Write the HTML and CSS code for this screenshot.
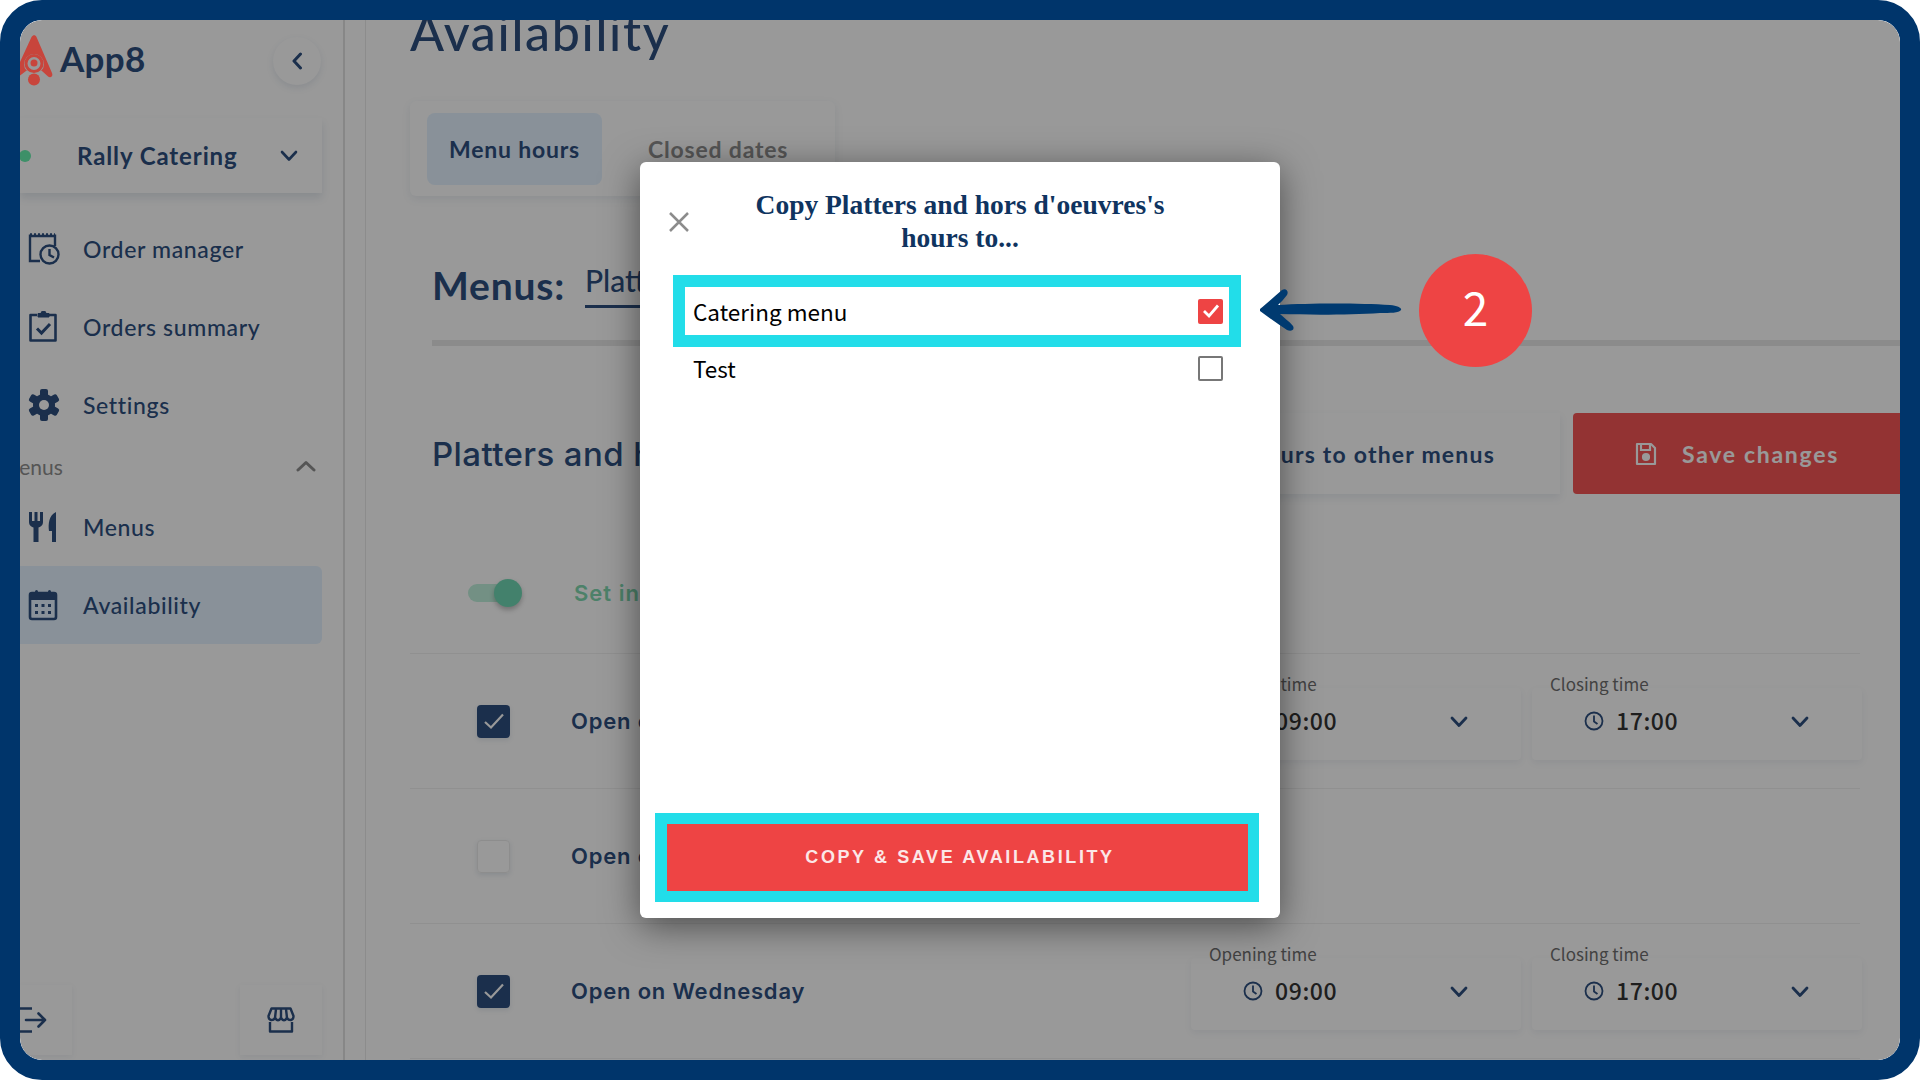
FILE: index.html
```html
<!DOCTYPE html>
<html>
	<head>
		<title>App8 - Availability</title>
		<link rel="stylesheet" href="styles.css">
	</head>
	<body>
		<div class="frame">
			<div class="app">
				<div class="sidebar">
					<div class="brand">
						<svg class="rocket" width="40" height="52" viewBox="0 0 40 52">
							<path fill="#c8453c" d="M11.500 2 C13 -0.500 15.500 -0.500 16.500 2 L32 38 C33.500 42 30 43.500 27.500 41 L22 36 H6 L-2 42 C-5 44 -6 40 -5 38 Z"/>
							<circle cx="14" cy="29" r="10" fill="#999"/>
							<circle cx="14" cy="28.500" r="8" fill="none" stroke="#c8453c" stroke-width="3"/>
							<circle cx="14" cy="28" r="3.500" fill="#c8453c"/>
							<circle cx="14" cy="44.500" r="6" fill="#c8453c"/>
						</svg>
						<span class="brand-name">App8</span>
						<div class="collapse">
							<svg width="12" height="18" viewBox="0 0 12 18"><path d="M9.5 2 L3 9 L9.5 16" fill="none" stroke="#2d4f7f" stroke-width="3" stroke-linecap="round" stroke-linejoin="round"/></svg>
						</div>
					</div>
					<div class="store-select">
						<span class="store-dot"></span>
						<span class="store-name">Rally Catering</span>
						<svg width="18" height="12" viewBox="0 0 18 12"><path d="M2 2 L9 9.5 L16 2" fill="none" stroke="#2d4f7f" stroke-width="2.6" stroke-linecap="round" stroke-linejoin="round"/></svg>
					</div>
					<div class="nav-item">
						<div class="nav-icon">
							<svg width="32" height="32" viewBox="0 0 32 32" fill="none" stroke="#2d4f7f" stroke-width="2.4">
								<path d="M2 1.5 V28 H12 M2 3 H27 V1.5 M27 3 V13" />
								<path d="M2 1.5 H27" stroke-dasharray="2 2"/>
								<circle cx="21.5" cy="21.5" r="9"/>
								<path d="M21.5 16 V22 L26 24.5"/>
							</svg>
						</div>
						Order manager
					</div>
					<div class="nav-item">
						<div class="nav-icon">
							<svg width="32" height="32" viewBox="0 0 32 32" fill="none" stroke="#2d4f7f" stroke-width="2.6">
								<path d="M9 4 H2.5 V29.5 H27.5 V4 H21" stroke-linejoin="round"/>
								<path d="M10 6 V2.5 H13 A2.5 2.5 0 0 1 18 2.5 H21 V6 Z" fill="#2d4f7f" stroke-width="1"/>
								<path d="M9 17.5 L13.5 22 L22 13" stroke-width="3"/>
							</svg>
						</div>
						Orders summary
					</div>
					<div class="nav-item">
						<div class="nav-icon">
							<svg width="32" height="32" viewBox="0 0 32 32" fill="#2d4f7f">
								<rect x="12" y="0" width="8" height="32" rx="2"/>
								<rect x="12" y="0" width="8" height="32" rx="2" transform="rotate(60 16 16)"/>
								<rect x="12" y="0" width="8" height="32" rx="2" transform="rotate(120 16 16)"/>
								<circle cx="16" cy="16" r="11"/>
								<circle cx="16" cy="16" r="5" fill="#fff"/>
							</svg>
						</div>
						Settings
					</div>
					<div class="nav-section">
						<span>Menus</span>
						<svg width="20" height="12" viewBox="0 0 20 12"><path d="M2 10 L10 2.5 L18 10" fill="none" stroke="#8e8e8e" stroke-width="3" stroke-linecap="round" stroke-linejoin="round"/></svg>
					</div>
					<div class="nav-item">
						<div class="nav-icon">
							<svg width="32" height="32" viewBox="0 0 32 32" fill="#2d4f7f">
								<path d="M1 1 H4 V10 H6.5 V1 H9.5 V10 H12 V1 H15 V11 C15 15 12 16 10.5 16.5 V31 H5.5 V16.5 C4 16 1 15 1 11 Z"/>
								<path d="M28 1 V31 H24 V20 H21 C20 13 21 4 28 1 Z"/>
							</svg>
						</div>
						Menus
					</div>
					<div class="nav-item nav-active">
						<div class="nav-icon">
							<svg width="32" height="32" viewBox="0 0 32 32">
								<rect x="2" y="4" width="26" height="26" rx="2" fill="none" stroke="#2d4f7f" stroke-width="2.6"/>
								<path d="M2 4 H28 V11 H2 Z" fill="#2d4f7f"/>
								<rect x="7" y="1" width="3" height="6" rx="1.5" fill="#2d4f7f"/>
								<rect x="20" y="1" width="3" height="6" rx="1.5" fill="#2d4f7f"/>
								<g fill="#2d4f7f">
									<rect x="7" y="15" width="3" height="3"/><rect x="13.5" y="15" width="3" height="3"/><rect x="20" y="15" width="3" height="3"/>
									<rect x="7" y="22" width="3" height="3"/><rect x="13.5" y="22" width="3" height="3"/><rect x="20" y="22" width="3" height="3"/>
								</g>
							</svg>
						</div>
						Availability
					</div>
					<div class="side-bottom">
						<div class="side-btn side-exit">
							<svg width="30" height="26" viewBox="0 0 30 26" fill="none" stroke="#2d4f7f" stroke-width="2.6">
								<path d="M0 1.5 H12 M0 24.5 H12"/>
								<path d="M6 13 H25 M18.500 6.500 L25 13 L18.500 19.500" stroke-linecap="round" stroke-linejoin="round"/>
							</svg>
						</div>
						<div class="side-btn side-store">
							<svg width="28" height="26" viewBox="0 0 28 26" fill="none" stroke="#2d4f7f" stroke-width="2.4" stroke-linejoin="round">
								<path d="M3 15 V24.500 H25 V15"/>
								<path d="M4.500 1.500 H23.500 L26.500 9 C26.500 14 22 14 20 11 C18 14 16 14 14 11 C12 14 10 14 8 11 C6 14 1.500 14 1.500 9 Z"/>
								<path d="M9 2 L8 11 M14 2 V11 M19 2 L20 11"/>
							</svg>
						</div>
					</div>
				</div>

				<div class="main">
					<h1 class="page-title">Availability</h1>
					<div class="tabs">
						<div class="tab tab-active">Menu hours</div>
						<div class="tab">Closed dates</div>
					</div>
					<div class="menu-picker">
						<h2>Menus:</h2>
						<span class="menu-link">Platters and hors d'oeuvres</span>
					</div>
					<div class="menu-line"></div>
					<div class="hours-head">
						<h3>Platters and hors d'oeuvres</h3>
						<div class="copy-btn">Copy hours to other menus</div>
						<div class="save-btn">
							<svg width="22" height="24" viewBox="0 0 22 24" fill="none" stroke="#fff" stroke-width="2.2">
								<path d="M2 2 H16 L20 6 V22 H2 Z" stroke-linejoin="round"/>
								<path d="M6 2 V8 H15 V2"/>
								<circle cx="11" cy="15" r="3" fill="#fff"/>
							</svg>
							Save changes
						</div>
					</div>
					<div class="day-row toggle-row">
						<div class="toggle"><span class="knob"></span></div>
						<span class="toggle-text">Set individual hours</span>
					</div>
					<div class="day-row">
						<div class="day-check on"><svg width="24" height="20" viewBox="0 0 24 20"><path d="M3 11 L9 16.500 L21 3.500" fill="none" stroke="#fff" stroke-width="2.200"/></svg></div>
						<span class="day-name">Open on Monday</span>
						<div class="time-field">
							<label>Opening time</label>
							<div class="time-value">
								<svg class="clock" width="20" height="20" viewBox="0 0 20 20" fill="none" stroke="#2d4f7f" stroke-width="1.800"><circle cx="10" cy="10" r="8.500"/><path d="M10 4.500 V10.500 L13.500 13"/></svg>
								<span>09:00</span>
								<svg class="chev" width="18" height="12" viewBox="0 0 18 12"><path d="M2 2 L9 9.500 L16 2" fill="none" stroke="#2d4f7f" stroke-width="2.800" stroke-linecap="round" stroke-linejoin="round"/></svg>
							</div>
						</div>
						<div class="time-field">
							<label>Closing time</label>
							<div class="time-value">
								<svg class="clock" width="20" height="20" viewBox="0 0 20 20" fill="none" stroke="#2d4f7f" stroke-width="1.800"><circle cx="10" cy="10" r="8.500"/><path d="M10 4.500 V10.500 L13.500 13"/></svg>
								<span>17:00</span>
								<svg class="chev" width="18" height="12" viewBox="0 0 18 12"><path d="M2 2 L9 9.500 L16 2" fill="none" stroke="#2d4f7f" stroke-width="2.800" stroke-linecap="round" stroke-linejoin="round"/></svg>
							</div>
						</div>
					</div>
					<div class="day-row">
						<div class="day-check"></div>
						<span class="day-name">Open on Tuesday</span>
					</div>
					<div class="day-row">
						<div class="day-check on"><svg width="24" height="20" viewBox="0 0 24 20"><path d="M3 11 L9 16.500 L21 3.500" fill="none" stroke="#fff" stroke-width="2.200"/></svg></div>
						<span class="day-name">Open on Wednesday</span>
						<div class="time-field">
							<label>Opening time</label>
							<div class="time-value">
								<svg class="clock" width="20" height="20" viewBox="0 0 20 20" fill="none" stroke="#2d4f7f" stroke-width="1.800"><circle cx="10" cy="10" r="8.500"/><path d="M10 4.500 V10.500 L13.500 13"/></svg>
								<span>09:00</span>
								<svg class="chev" width="18" height="12" viewBox="0 0 18 12"><path d="M2 2 L9 9.500 L16 2" fill="none" stroke="#2d4f7f" stroke-width="2.800" stroke-linecap="round" stroke-linejoin="round"/></svg>
							</div>
						</div>
						<div class="time-field">
							<label>Closing time</label>
							<div class="time-value">
								<svg class="clock" width="20" height="20" viewBox="0 0 20 20" fill="none" stroke="#2d4f7f" stroke-width="1.800"><circle cx="10" cy="10" r="8.500"/><path d="M10 4.500 V10.500 L13.500 13"/></svg>
								<span>17:00</span>
								<svg class="chev" width="18" height="12" viewBox="0 0 18 12"><path d="M2 2 L9 9.500 L16 2" fill="none" stroke="#2d4f7f" stroke-width="2.800" stroke-linecap="round" stroke-linejoin="round"/></svg>
							</div>
						</div>
					</div>
				</div>

				<div class="dim"></div>

				<div class="modal">
					<div class="modal-head">
						<svg class="modal-close" width="22" height="22" viewBox="0 0 22 22"><path d="M2 2 L20 20 M20 2 L2 20" stroke="#8c8c8c" stroke-width="2.500" fill="none"/></svg>
						<div class="modal-title">Copy Platters and hors d'oeuvres's hours to...</div>
					</div>
					<div class="copy-row copy-row-marked">
						<span>Catering menu</span>
						<div class="copy-check on"><svg width="20" height="18" viewBox="0 0 20 18"><path d="M3 9 L8 14 L17 3.500" fill="none" stroke="#fff" stroke-width="2.800"/></svg></div>
					</div>
					<div class="copy-row">
						<span>Test</span>
						<div class="copy-check"></div>
					</div>
					<div class="copy-action">
						<div class="copy-save">COPY &amp; SAVE AVAILABILITY</div>
					</div>
				</div>

				<svg class="arrow" width="142" height="42" viewBox="0 0 142 42">
					<path fill="#003a70" d="M0 20 C5 16 14 8 22 1 C26 -1 29 2 27 6 C24 10 21 13 18 16 C50 14 100 14 130 16 C138 17 142 19 141 21 C139 24 130 24 120 24 C90 26 50 26 20 25 C24 29 29 32 33 37 C35 41 31 43 27 41 C18 35 8 28 0 22 Z"/>
				</svg>
				<div class="step-badge">2</div>
			</div>
		</div>
	</body>
</html>
```

FILE: styles.css
```css
html {
  height: 100%;
}

body {
  margin: 0;
  background-color: #fff;
  font-family: "Lato", sans-serif;
  color: #2d4f7f;
}

.frame {
  width: 1920px;
  height: 1080px;
  box-sizing: border-box;
  border: 20px solid #00356b;
  border-radius: 42px;
  overflow: hidden;
}

.app {
  position: relative;
  display: flex;
  width: 1880px;
  height: 1040px;
  border-radius: 22px;
  overflow: hidden;
  background-color: #fff;
}

/* sidebar */

.sidebar {
  display: flex;
  flex-direction: column;
  flex: none;
  width: 325px;
  height: 1040px;
  box-sizing: border-box;
  padding-right: 21px;
  border-right: 2px solid #e2e2e2;
}

.brand {
  display: flex;
  align-items: center;
  height: 50px;
  margin-top: 16px;
  margin-bottom: 32px;
}

/* the logo keeps its colour through the dim layer */
.rocket {
  position: relative;
  z-index: 2;
  flex: none;
  overflow: visible;
}

.brand-name {
  margin-left: 0;
  margin-top: -6px;
  font-size: 35px;
  font-weight: 700;
  letter-spacing: 0.3px;
}

.collapse {
  display: flex;
  align-items: center;
  justify-content: center;
  width: 48px;
  height: 48px;
  margin-left: auto;
  margin-right: 1px;
  border-radius: 50%;
  box-shadow: 0 3px 7px rgba(60, 90, 130, 0.12);
}

.store-select {
  display: flex;
  align-items: center;
  height: 75px;
  margin-bottom: 17px;
  padding-right: 24px;
  box-shadow: 0 5px 8px rgba(60, 90, 130, 0.14);
}

.store-dot {
  flex: none;
  width: 12px;
  height: 12px;
  margin-left: -1px;
  border-radius: 50%;
  background-color: #66f0ae;
}

.store-name {
  flex: 1;
  margin-left: 46px;
  font-size: 24px;
  font-weight: 700;
  letter-spacing: 0.9px;
}

.nav-item {
  display: flex;
  align-items: center;
  flex: none;
  height: 78px;
  padding-left: 9px;
  font-size: 23px;
  font-weight: 500;
  letter-spacing: 0.65px;
}

.nav-icon {
  display: flex;
  flex: none;
  width: 54px;
}

.nav-icon svg {
  margin-left: -1px;
}

.nav-active {
  border-radius: 0 6px 6px 0;
  background-color: #e4f2ff;
}

.nav-section {
  display: flex;
  align-items: center;
  justify-content: space-between;
  flex: none;
  height: 44px;
  margin-left: -20px;
  padding-right: 6px;
  color: #8e8e8e;
  font-size: 21px;
}

.side-bottom {
  display: flex;
  justify-content: space-between;
  margin-top: auto;
  margin-bottom: 5px;
}

.side-btn {
  display: flex;
  align-items: center;
  height: 70px;
  box-shadow: 0 2px 6px rgba(60, 90, 130, 0.08);
}

.side-exit {
  width: 52px;
}

.side-store {
  justify-content: center;
  width: 82px;
}

/* main */

.main {
  flex: none;
  width: 1535px;
  height: 1040px;
  box-sizing: border-box;
  margin-left: 20px;
  padding-left: 44px;
  border-left: 1px solid #eaeaea;
  font-family: "Inter", sans-serif;
}

.page-title {
  margin: -20px 0 0 0;
  height: 66px;
  font-family: "Lato", sans-serif;
  font-size: 50px;
  line-height: 64px;
  font-weight: 500;
  letter-spacing: 1.7px;
}

.tabs {
  display: flex;
  align-items: center;
  width: 425px;
  height: 95px;
  box-sizing: border-box;
  margin-top: 35px;
  padding-left: 17px;
  border-radius: 6px;
  box-shadow: 0 3px 8px rgba(60, 90, 130, 0.1);
  font-family: "Lato", sans-serif;
  font-size: 23px;
  font-weight: 700;
  letter-spacing: 0.8px;
  white-space: nowrap;
}

.tab {
  padding: 0 22px;
  margin-right: 24px;
  line-height: 72px;
  border-radius: 8px;
  color: #8e8e8e;
}

.tab-active {
  background-color: #e4f2ff;
  color: #2d4f7f;
}

.menu-picker {
  display: flex;
  align-items: center;
  height: 115px;
  margin-top: 31px;
  margin-left: 22px;
}

.menu-picker h2 {
  margin: 0 20px 0 0;
  font-family: "Lato", sans-serif;
  font-size: 39px;
  font-weight: 700;
  letter-spacing: 0.8px;
}

.menu-link {
  padding-bottom: 7px;
  border-bottom: 3px solid #2d4f7f;
  font-family: "Lato", sans-serif;
  font-size: 30px;
  font-weight: 500;
  white-space: nowrap;
}

.menu-line {
  height: 6px;
  margin-left: 22px;
  margin-top: -2px;
  background-color: #e8e8e8;
}

.hours-head {
  display: flex;
  align-items: center;
  height: 81px;
  margin-top: 67px;
  margin-left: 22px;
}

.hours-head h3 {
  margin: 0;
  flex: 1;
  font-size: 33px;
  font-weight: 500;
  letter-spacing: 0.4px;
  white-space: nowrap;
}

.copy-btn {
  display: flex;
  align-items: center;
  height: 81px;
  margin-right: 13px;
  padding: 0 65px 0 40px;
  box-shadow: 0 4px 8px rgba(60, 90, 130, 0.1);
  font-family: "Lato", sans-serif;
  font-size: 23px;
  font-weight: 700;
  letter-spacing: 1.2px;
  white-space: nowrap;
}

.save-btn {
  display: flex;
  align-items: center;
  gap: 25px;
  flex: none;
  width: 327px;
  height: 81px;
  box-sizing: border-box;
  padding-left: 62px;
  border-radius: 4px 0 0 4px;
  background-color: #f65555;
  color: #fff;
  font-family: "Lato", sans-serif;
  font-size: 23px;
  font-weight: 700;
  letter-spacing: 1.700px;
}

.day-row {
  display: flex;
  align-items: center;
  width: 1450px;
  height: 135px;
  box-sizing: border-box;
  padding-left: 67px;
  border-bottom: 1px solid #f0f0f0;
}

.toggle-row {
  height: 160px;
  padding-top: 39px;
  padding-left: 58px;
}

.toggle {
  position: relative;
  flex: none;
  width: 44px;
  height: 18px;
  border-radius: 9px;
  background-color: #c0f0dc;
}

.knob {
  position: absolute;
  top: -5px;
  right: -10px;
  width: 28px;
  height: 28px;
  border-radius: 50%;
  background-color: #70d8b4;
  box-shadow: 0 3px 5px rgba(0, 0, 0, 0.25);
}

.toggle-text {
  margin-left: 62px;
  color: #80d8b0;
  font-size: 22px;
  font-weight: 600;
  letter-spacing: 1px;
  white-space: nowrap;
}

.day-check {
  display: flex;
  align-items: center;
  justify-content: center;
  flex: none;
  width: 33px;
  height: 33px;
  box-sizing: border-box;
  border-radius: 4px;
  border: 1px solid #ececec;
  box-shadow: 0 2px 5px rgba(60, 90, 130, 0.14);
}

.day-check.on {
  border: 0;
  background-color: #2d4f7f;
}

.day-name {
  width: 620px;
  flex: none;
  margin-left: 61px;
  font-size: 22px;
  font-weight: 600;
  letter-spacing: 0.8px;
  white-space: nowrap;
}

.time-field {
  flex: none;
  width: 330px;
  height: 72px;
  margin-top: 6px;
  margin-right: 11px;
  box-sizing: border-box;
  border-radius: 4px;
  box-shadow: 0 3px 7px rgba(60, 90, 130, 0.08);
}

.time-field label {
  display: block;
  height: 10px;
  margin-top: -16px;
  padding-left: 18px;
  color: #6e6e6e;
  font-family: "Noto Sans CJK SC", sans-serif;
  font-size: 17px;
  line-height: 24px;
}

.time-value {
  display: flex;
  align-items: center;
  height: 40px;
  margin-top: 18px;
  padding-left: 52px;
  color: #333;
  font-family: "Noto Sans CJK SC", sans-serif;
  font-size: 23px;
  font-weight: 500;
  letter-spacing: 0.6px;
}

.time-value span {
  margin-left: 12px;
}

.clock {
  margin-top: 2px;
}

.chev {
  margin-top: 3px;
  margin-left: auto;
  margin-right: 53px;
}

/* dim layer, dialog and the two call-out marks lie over the page */

.dim {
  position: absolute;
  top: 0;
  right: 0;
  bottom: 0;
  left: 0;
  background-color: rgba(0, 0, 0, 0.4);
}

.modal {
  position: absolute;
  top: 142px;
  left: 620px;
  z-index: 3;
  display: flex;
  flex-direction: column;
  width: 640px;
  height: 756px;
  border-radius: 6px;
  background-color: #fff;
  box-shadow: 0 8px 36px rgba(0, 0, 0, 0.5);
}

.modal-head {
  position: relative;
  height: 113px;
  box-sizing: border-box;
  padding: 26px 90px 0;
}

.modal-close {
  position: absolute;
  top: 49px;
  left: 28px;
}

.modal-title {
  color: #0f3460;
  font-family: "Liberation Serif", serif;
  font-size: 27.500px;
  font-weight: 700;
  line-height: 33px;
  text-align: center;
}

.copy-row {
  display: flex;
  align-items: center;
  justify-content: space-between;
  height: 42px;
  margin: 0 39px 0 33px;
  padding: 0 18px 0 20px;
  color: #000;
  font-family: "Noto Sans CJK SC", sans-serif;
  font-size: 22.500px;
}

.copy-row-marked {
  height: 72px;
  box-sizing: border-box;
  padding: 0 6px 0 8px;
  border: 12px solid #22dde9;
}

.copy-check {
  display: flex;
  align-items: center;
  justify-content: center;
  width: 25px;
  height: 25px;
  box-sizing: border-box;
  border: 2.500px solid #777;
  border-radius: 2px;
}

.copy-check.on {
  border: 0;
  background-color: #ee4444;
}

.copy-action {
  margin: auto 21px 16px 15px;
  border: 11px solid #22dde9;
  border-left-width: 12px;
}

.copy-save {
  height: 67px;
  padding-left: 5px;
  background-color: #ee4444;
  color: #fbe7e7;
  font-family: "Liberation Sans", sans-serif;
  font-size: 18px;
  font-weight: 700;
  letter-spacing: 2.600px;
  line-height: 67px;
  text-align: center;
}

.arrow {
  position: absolute;
  top: 269px;
  left: 1240px;
  z-index: 3;
}

.step-badge {
  position: absolute;
  top: 234px;
  left: 1399px;
  z-index: 3;
  width: 113px;
  height: 113px;
  border-radius: 50%;
  background-color: #ee4444;
  color: #fff;
  font-family: "Noto Sans CJK SC", sans-serif;
  font-size: 46px;
  font-weight: 400;
  line-height: 104px;
  text-align: center;
}
```
